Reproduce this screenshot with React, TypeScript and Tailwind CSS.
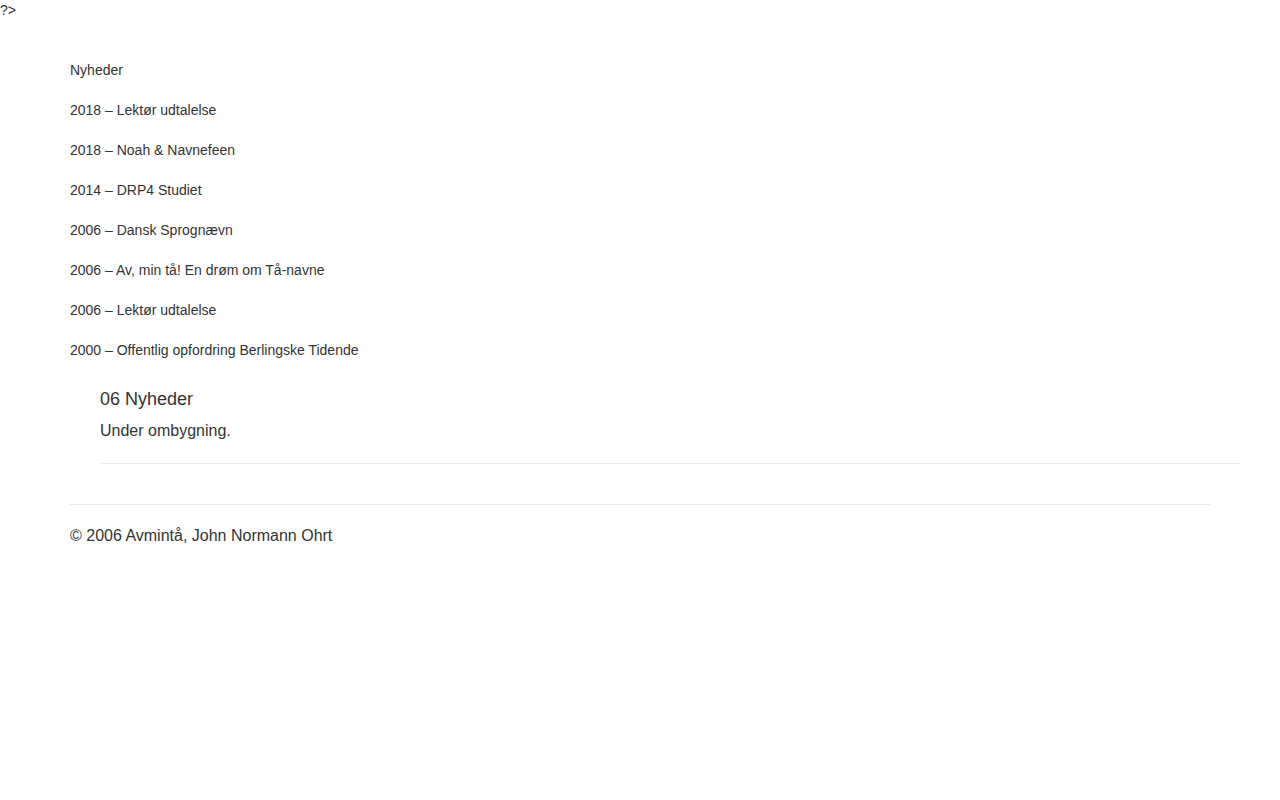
export default function App() {
  const items = [
    "Nyheder",
    "2018 – Lektør udtalelse",
    "2018 – Noah & Navnefeen",
    "2014 – DRP4 Studiet",
    "2006 – Dansk Sprognævn",
    "2006 – Av, min tå! En drøm om Tå-navne",
    "2006 – Lektør udtalelse",
    "2000 – Offentlig opfordring Berlingske Tidende",
  ];
  return (
    <div className="min-h-[800px] bg-white text-[#333333]" style={{ fontFamily: '"Liberation Sans", Arial, sans-serif' }}>
      <div className="text-[14px] leading-[20px]">?&gt;</div>
      <div className="px-[70px] pt-[30px]">
        <ul className="flex flex-col">
          {items.map((t) => (
            <li key={t} className="h-[40px] text-[14px] leading-[40px]">{t}</li>
          ))}
        </ul>
        <div className="ml-[30px] mr-[-30px] mt-[17px] border-b border-[#e8e8e8] pb-[20px]">
          <h2 className="text-[18px] leading-[24px]">06 Nyheder</h2>
          <p className="mt-[8px] text-[16px] leading-[24px]">Under ombygning.</p>
        </div>
        <div className="mt-[40px] border-t border-[#e8e8e8] pt-[20px]">
          <p className="text-[16px] leading-[22px]">© 2006 Avmintå, John Normann Ohrt</p>
        </div>
      </div>
    </div>
  );
}
